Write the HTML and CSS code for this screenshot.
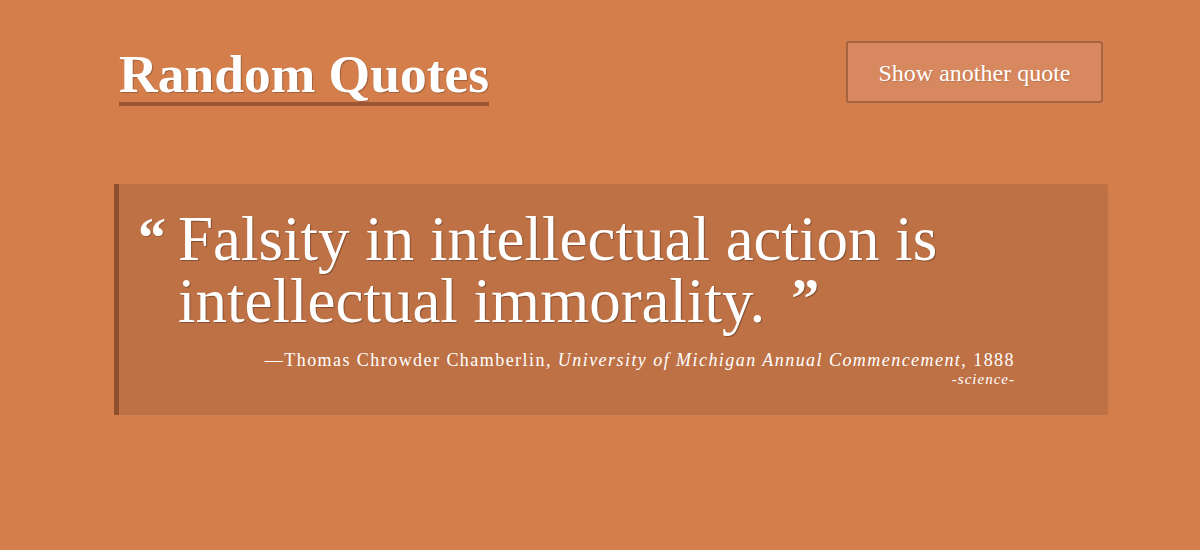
FILE: index.html
```html
<!DOCTYPE html>
<html lang="en">
<head>
<meta charset="utf-8">
<title>Random Quotes</title>
<link rel="stylesheet" href="styles.css">
</head>
<body>
<div class="page">
  <header class="header">
    <h1 class="title">Random Quotes</h1>
    <button class="btn" type="button">Show another quote</button>
  </header>
  <blockquote class="card">
    <div class="quote">
      <span class="mark-open">&ldquo;</span>
      <p class="text">Falsity in intellectual action is intellectual immorality.<span class="mark-close">&rdquo;</span></p>
    </div>
    <footer class="meta">
      <div class="source">&mdash;Thomas Chrowder Chamberlin, <cite>University of Michigan Annual Commencement</cite>, 1888</div>
      <div class="tag">-science-</div>
    </footer>
  </blockquote>
</div>
</body>
</html>
```

FILE: styles.css
```css
html, body {
  margin: 0;
  padding: 0;
}
body {
  background: #d47e4c;
  color: #fff;
  font-family: "Liberation Serif", "Times New Roman", serif;
  height: 550px;
  overflow: hidden;
}
.page {
  width: 994px;
  margin-left: 114px;
  padding-top: 41px;
}
.header {
  display: flex;
  justify-content: space-between;
  align-items: flex-start;
  padding: 0 5px 0 5px;
}
.title {
  margin: 7px 0 0 0;
  font-size: 53.5px;
  font-weight: 700;
  line-height: 53px;
  padding-bottom: 1px;
  border-bottom: 4px solid #9c5631;
  text-shadow: 1px 1px 1px rgba(0,0,0,0.25);
}
.btn {
  width: 257px;
  height: 62px;
  background: #d8885e;
  border: 2px solid #a5643f;
  border-radius: 3px;
  color: #fff;
  font-family: inherit;
  font-size: 24px;
  padding: 3px 0 0 0;
  text-shadow: 1px 1px 1px rgba(0,0,0,0.15);
}
.card {
  margin: 78px 0 0 0;
  background: #be7145;
  border-left: 5px solid #8e4f2d;
  border-radius: 0 3px 3px 0;
  padding: 24px 93px 30px 19px;
  height: 177px;
}
.quote {
  display: flex;
  align-items: flex-start;
}
.mark-open {
  font-size: 56px;
  font-weight: 700;
  line-height: 62px;
  width: 40px;
  flex: none;
  margin-top: -1px;
  text-shadow: 1px 1px 1px rgba(0,0,0,0.2);
}
.text {
  margin: 0;
  font-size: 63px;
  line-height: 62px;
  text-shadow: 1px 1px 1px rgba(0,0,0,0.3);
}
.mark-close {
  font-size: 56px;
  font-weight: 700;
  vertical-align: 4px;
  line-height: 0;
  margin-left: 26px;
}
.meta {
  text-align: right;
  margin-top: 17px;
}
.source {
  font-size: 18px;
  letter-spacing: 1.45px;
  line-height: 22px;
}
.source cite {
  font-style: italic;
}
.tag {
  font-size: 15px;
  font-style: italic;
  letter-spacing: 1px;
  line-height: 16px;
}
```
